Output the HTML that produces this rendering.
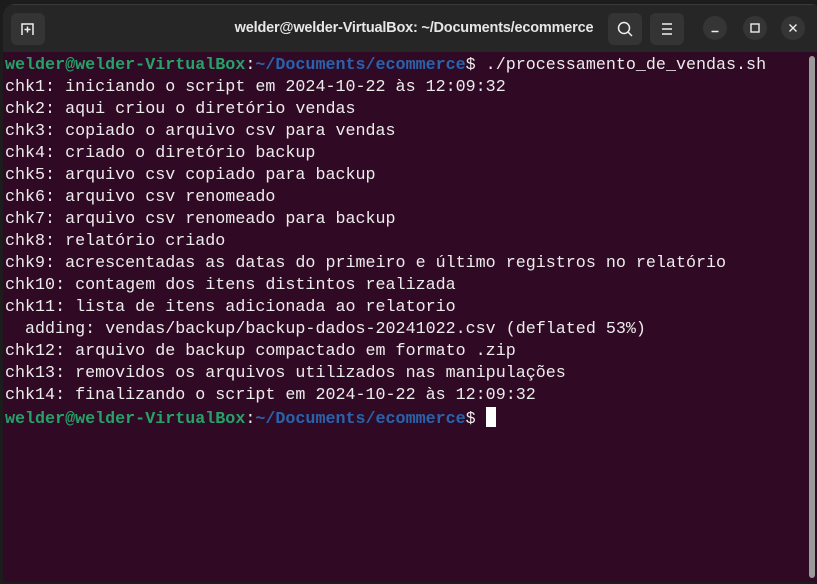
<!DOCTYPE html>
<html><head><meta charset="utf-8"><style>
html,body{margin:0;padding:0;width:817px;height:584px;overflow:hidden;background:#1c1c1c;}
.win{position:absolute;left:3px;top:4px;width:820px;height:578px;background:#300a24;border-radius:12px 12px 0 0;overflow:hidden;}
.tb{position:absolute;left:0;top:0;width:100%;height:47px;background:#262626;border-top:1px solid #3a3a3a;}
.btn{position:absolute;top:8px;width:34px;height:32px;background:#343434;border-radius:6px;}
.circ{position:absolute;top:11px;width:24px;height:24px;border-radius:50%;background:#353535;}
.title{position:absolute;top:0;left:0;width:812px;text-align:center;color:#e6e6e6;font:bold 14.5px "Liberation Sans",sans-serif;line-height:47px;letter-spacing:-0.2px;padding-left:10px;box-sizing:border-box}
.term{position:absolute;left:2px;top:51px;font-family:"Liberation Mono",monospace;font-size:16.7px;line-height:22px;color:#ececec;white-space:pre;}
.g{color:#26a269;font-weight:bold}.b{color:#2a62ab;font-weight:bold}
.cur{display:inline-block;width:10px;height:20px;background:#fff;vertical-align:-4px}
.sb{position:absolute;left:806px;top:52px;width:6px;height:522px;background:#9a9a9a;border-radius:3px;}
</style></head><body>
<div class="win">
<div class="tb">
 <div class="btn" style="left:8px"><svg width="34" height="32"><path d="M11 22V11h11v11M16.5 13.5v6M13.5 16.5h6" stroke="#eee" stroke-width="1.5" fill="none"/></svg></div>
 <div class="title">welder@welder-VirtualBox: ~/Documents/ecommerce</div>
 <div class="btn" style="left:605px"><svg width="34" height="32"><circle cx="16" cy="15" r="5.5" stroke="#eee" stroke-width="1.5" fill="none"/><path d="M20 19l4 4" stroke="#eee" stroke-width="1.5"/></svg></div>
 <div class="btn" style="left:647px"><svg width="34" height="32"><path d="M12 11h10M12 16h10M12 21h10" stroke="#eee" stroke-width="1.4"/></svg></div>
 <div class="circ" style="left:700px"><svg width="24" height="24"><path d="M8.5 15.5h7" stroke="#eee" stroke-width="1.5"/></svg></div>
 <div class="circ" style="left:740px"><svg width="24" height="24"><rect x="8" y="8" width="8" height="8" stroke="#eee" stroke-width="1.4" fill="none"/></svg></div>
 <div class="circ" style="left:778px"><svg width="24" height="24"><path d="M8.5 8.5l7 7M15.5 8.5l-7 7" stroke="#eee" stroke-width="1.4"/></svg></div>
</div>
<div class="term"><span class="g">welder@welder-VirtualBox</span>:<span class="b">~/Documents/ecommerce</span>$ ./processamento_de_vendas.sh
chk1: iniciando o script em 2024-10-22 às 12:09:32
chk2: aqui criou o diretório vendas
chk3: copiado o arquivo csv para vendas
chk4: criado o diretório backup
chk5: arquivo csv copiado para backup
chk6: arquivo csv renomeado
chk7: arquivo csv renomeado para backup
chk8: relatório criado
chk9: acrescentadas as datas do primeiro e último registros no relatório
chk10: contagem dos itens distintos realizada
chk11: lista de itens adicionada ao relatorio
  adding: vendas/backup/backup-dados-20241022.csv (deflated 53%)
chk12: arquivo de backup compactado em formato .zip
chk13: removidos os arquivos utilizados nas manipulações
chk14: finalizando o script em 2024-10-22 às 12:09:32
<span class="g">welder@welder-VirtualBox</span>:<span class="b">~/Documents/ecommerce</span>$ <span class="cur"></span></div>
<div class="sb"></div>
</div>
</body></html>
